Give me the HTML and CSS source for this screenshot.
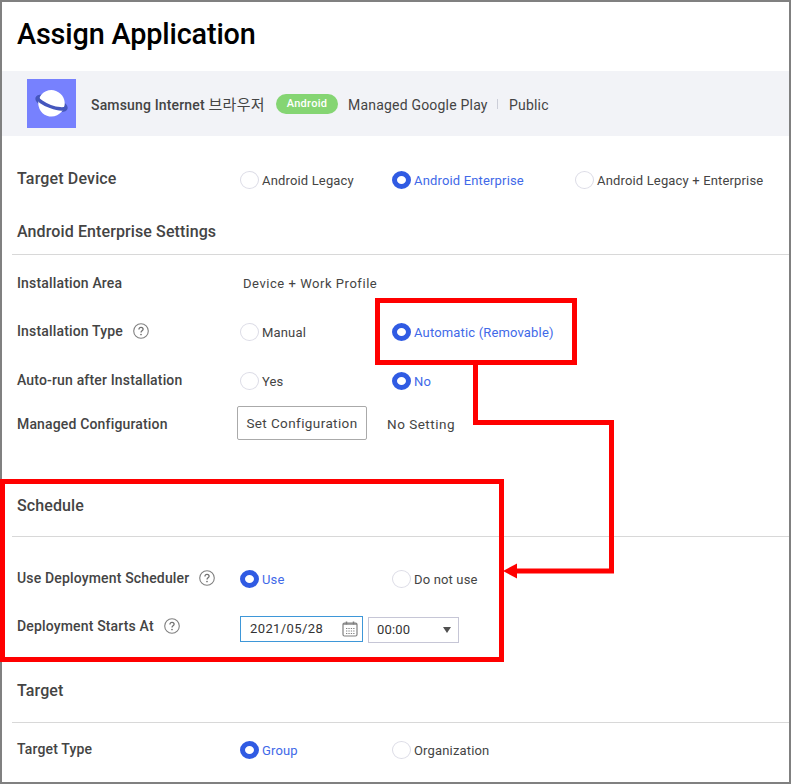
FILE: index.html
```html
<!DOCTYPE html>
<html lang="en">
<head>
<meta charset="utf-8">
<title>Assign Application</title>
<link rel="stylesheet" href="styles.css">
</head>
<body>
<svg class="defs" width="0" height="0" aria-hidden="true">
  <symbol id="help" viewBox="0 0 16 16">
    <circle cx="8" cy="8" r="7.3" fill="none" stroke="#808080" stroke-width="1.1"/>
    <path d="M5.900 6.500C5.900 5.100 6.800 4.400 8 4.400s2.100.7 2.100 1.900c0 1.500-2.050 1.600-2.050 3.100" fill="none" stroke="#707070" stroke-width="1.300"/>
    <circle cx="8" cy="11.500" r=".85" fill="#707070"/>
  </symbol>
</svg>
<main class="page">
  <h1 class="title">Assign Application</h1>

  <div class="app">
    <svg class="app-icon" viewBox="0 0 49 49">
      <rect width="49" height="49" fill="#7781fe"/>
      <g transform="translate(24.500 24.300) rotate(20)" fill="none" stroke="#4557bd" stroke-width="3.400">
        <ellipse rx="15.300" ry="5"/>
        <circle r="13.200" fill="#fff" stroke="none"/>
        <path d="M-15.100-.8A15.300 5 0 0 0 15.100-.8"/>
      </g>
    </svg>
    <span class="app-name">Samsung Internet <span class="app-name-ko">브라우저</span></span>
    <span class="badge">Android</span>
    <span class="store">Managed Google Play</span>
    <span class="divider"></span>
    <span class="scope">Public</span>
  </div>

  <div class="row row-device">
    <span class="label label-lg">Target Device</span>
    <label class="radio"><i class="dot"></i><span>Android Legacy</span></label>
    <label class="radio on"><i class="dot"></i><span>Android Enterprise</span></label>
    <label class="radio"><i class="dot"></i><span>Android Legacy + Enterprise</span></label>
  </div>

  <h2 class="heading heading-settings">Android Enterprise Settings</h2>
  <div class="row row-area">
    <span class="label">Installation Area</span>
    <span class="value">Device + Work Profile</span>
  </div>
  <div class="row row-type">
    <span class="label">Installation Type<svg class="help"><use href="#help"/></svg></span>
    <label class="radio"><i class="dot"></i><span>Manual</span></label>
    <label class="radio on"><i class="dot"></i><span>Automatic (Removable)</span></label>
  </div>
  <div class="row row-auto">
    <span class="label">Auto-run after Installation</span>
    <label class="radio"><i class="dot"></i><span>Yes</span></label>
    <label class="radio on"><i class="dot"></i><span>No</span></label>
  </div>
  <div class="row row-config">
    <span class="label">Managed Configuration</span>
    <button class="button">Set Configuration</button>
    <span class="status">No Setting</span>
  </div>

  <h2 class="heading heading-schedule">Schedule</h2>
  <div class="row row-scheduler">
    <span class="label">Use Deployment Scheduler<svg class="help"><use href="#help"/></svg></span>
    <label class="radio on"><i class="dot"></i><span>Use</span></label>
    <label class="radio"><i class="dot"></i><span>Do not use</span></label>
  </div>
  <div class="row row-starts">
    <span class="label">Deployment Starts At<svg class="help"><use href="#help"/></svg></span>
    <div class="fields">
      <div class="date"><span>2021/05/28</span>
        <svg class="calendar" viewBox="0 0 16 16" fill="none" stroke="#808080">
          <rect x="1" y="2" width="14" height="13" rx="1.500" stroke-width="1.200"/>
          <path d="M1 3h14" stroke-width="1.400"/>
          <path d="M4.500 0.500v3M11.500 0.500v3" stroke-width="1.500"/>
          <path d="M4 7.500h8.500M4 10h8.500M4 12.500h8.500" stroke-width="1" stroke-dasharray="1.300 1.100"/>
        </svg>
      </div>
      <div class="time"><span>00:00</span><svg class="caret" viewBox="0 0 8 6"><path d="M0 0h8L4 6Z" fill="#505050"/></svg></div>
    </div>
  </div>

  <h2 class="heading heading-target">Target</h2>
  <div class="row row-target">
    <span class="label">Target Type</span>
    <label class="radio on"><i class="dot"></i><span>Group</span></label>
    <label class="radio"><i class="dot"></i><span>Organization</span></label>
  </div>
</main>
<svg class="callout" width="791" height="784" viewBox="0 0 791 784" fill="none" stroke="#f00" stroke-width="5">
  <rect x="377.500" y="300.500" width="197" height="62"/>
  <rect x="2.500" y="481.500" width="499" height="178"/>
  <path d="M475.500 364V422.500H611.500V571H515"/>
  <path d="M503 571l14-7.500v15Z" fill="#f00" stroke="none"/>
</svg>
</body>
</html>
```

FILE: styles.css
```css
* { box-sizing: border-box; }
body { margin: 0; background: #fff; color: #444; font: 13px/20px Roboto, "Noto Sans CJK KR", sans-serif; }
h1, h2 { margin: 0; }
.defs { position: absolute; }
.page { width: 791px; height: 784px; border: 2px solid #808080; overflow: hidden; }

.title { height: 69px; padding: 12px 0 0 15px; color: #000; font-size: 28.800px; line-height: 40px; font-weight: 500; letter-spacing: -.15px; }

.app { display: flex; align-items: center; height: 65px; padding-left: 25px; background: #f2f3f7; white-space: nowrap; }
.app-icon { width: 49px; height: 49px; margin-right: 15px; }
.app-name { width: 185px; font-size: 14px; font-weight: 500; letter-spacing: .16px; padding-top: 2px; }
.app-name-ko { font-size: 15px; font-weight: 400; letter-spacing: .3px; }
.badge { width: 62px; height: 20px; margin-right: 10px; border-radius: 10px; background: #85d573; color: #fff; font-size: 11px; font-weight: 500; letter-spacing: .3px; text-align: center; }
.store { width: 149px; font-size: 14px; letter-spacing: .2px; padding-top: 2px; }
.divider { width: 1px; height: 10px; margin-right: 11px; background: #ccced8; }
.scope { font-size: 14px; letter-spacing: .2px; padding-top: 2px; }

.row { display: grid; grid-template-columns: 222px 152px 183px 1fr; align-items: center; padding-left: 15px; white-space: nowrap; }
.label { display: flex; align-items: center; font-size: 14px; font-weight: 500; letter-spacing: .16px; }
.label-lg { font-size: 16px; letter-spacing: .15px; }
.help { width: 16px; height: 16px; margin-left: 10px; }
.value { padding: 1px 0 0 4px; font-size: 13px; letter-spacing: .54px; }

.radio { display: flex; align-items: center; gap: 3.500px; padding: 2px 0 0 .5px; letter-spacing: .16px; }
.radio span { padding-top: 1px; }
.dot { width: 19px; height: 18px; border: 1.500px solid #dcdce6; border-radius: 50%; background: #fff; }
.on { color: #4169e8; }
.on .dot { border: 5.500px solid #305be3; }

.heading { margin-left: 10px; padding-left: 5px; border-bottom: 1px solid #d8d8d8; font-size: 16px; line-height: 20px; font-weight: 500; letter-spacing: .11px; }
.heading-settings { padding-top: 21px; padding-bottom: 12px; }
.heading-schedule { padding-top: 58px; padding-bottom: 20px; }
.heading-target { padding-top: 31px; padding-bottom: 21px; }

.row-device { height: 44px; margin-top: 21px; }
.row-area { height: 56px; }
.row-type { height: 40px; }
.row-auto { height: 58px; }
.row-config { height: 29px; grid-template-columns: 220px 150px 1fr; }
.row-scheduler { height: 48px; margin-top: 17px; }
.row-starts { height: 48px; grid-template-columns: 223px 1fr; }
.row-target { height: 52px; }

.button { width: 130px; height: 34px; margin: -4px 0 -2px; padding: 0; border: 1px solid #aaa; border-radius: 2px; background: #fff; color: #444; font: 13.500px/20px Roboto, sans-serif; letter-spacing: .4px; }
.status { font-size: 13.500px; letter-spacing: .5px; }

.fields { display: flex; gap: 5px; padding-top: 7px; color: #333; }
.date, .time { display: flex; align-items: center; justify-content: space-between; height: 26px; padding: 0 4px 0 9px; border: 1px solid #3e97d8; letter-spacing: .4px; }
.date { width: 123px; }
.time { width: 91px; margin-top: 1px; padding: 0 7px 0 8px; border-color: #c6c6d6; letter-spacing: .2px; }
.calendar { width: 16px; height: 16px; }
.caret { width: 8px; height: 6px; }

.callout { position: absolute; left: 0; top: 0; pointer-events: none; }
```
